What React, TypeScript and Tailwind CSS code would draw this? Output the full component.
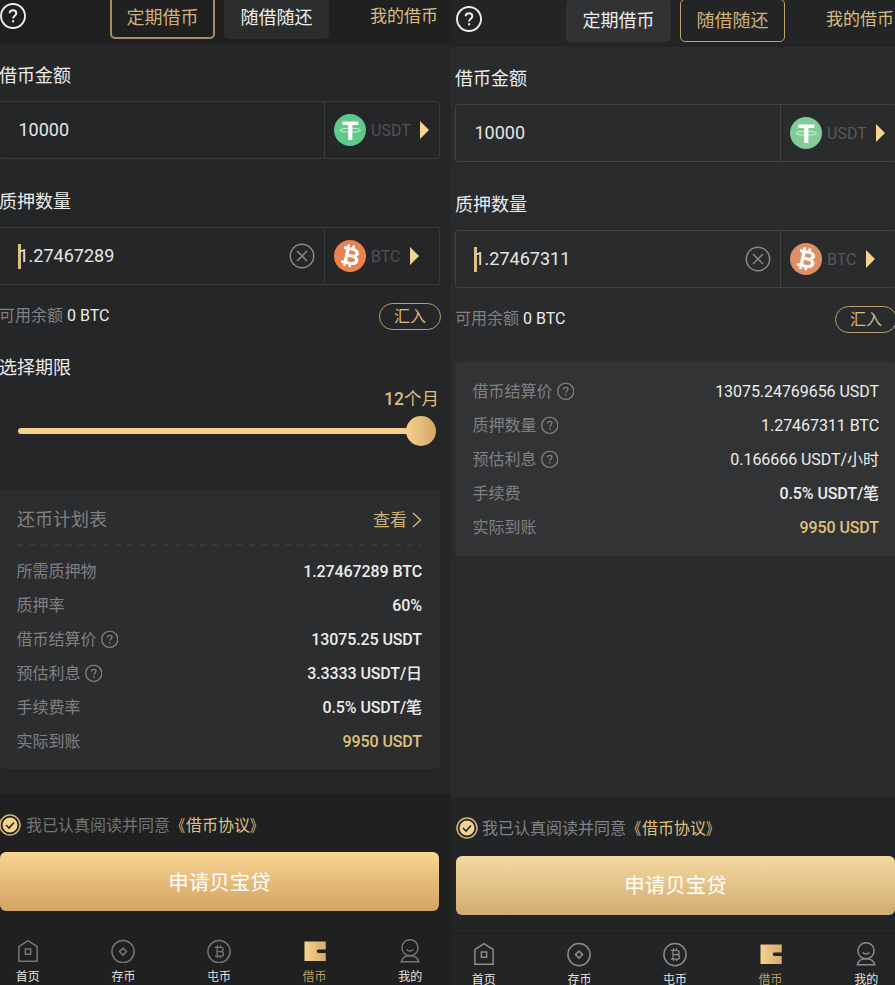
import type { ReactNode } from "react";
import clsx from "clsx";

type Row = { label: string; value: string; help?: boolean; tone?: "regular" | "bold" | "gold" };

const Help = ({ className }: { className: string }) => (
  <svg viewBox="0 0 26 26" fill="none" stroke="currentColor" className={className}>
    <circle cx="13" cy="13" r="12" strokeWidth="1.9" />
    <path d="M9.7 10.3c0-1.8 1.4-3 3.3-3s3.3 1.2 3.3 2.9c0 2.5-3.2 2.5-3.2 5.2" strokeWidth="2" />
    <path d="M13.1 17.2v2.1" strokeWidth="2.1" />
  </svg>
);

const Usdt = ({ dim }: { dim: boolean }) => (
  <svg viewBox="0 0 32 32" className="size-8 shrink-0">
    <circle cx="16" cy="16" r="16" fill={dim ? "#83cb98" : "#61c88c"} />
    <path d="M8.300 7.400h16v3.700h-5.900v14.900h-4.200V11.100H8.300z" fill="#fff" />
    <ellipse cx="16.300" cy="16.200" rx="10.300" ry="2" fill="none" stroke="#fff" strokeOpacity="0.85" strokeWidth="0.800" />
  </svg>
);

const Btc = ({ dim }: { dim: boolean }) => (
  <svg viewBox="0 0 32 32" className="size-8 shrink-0">
    <circle cx="16" cy="16" r="16" fill={dim ? "#de9064" : "#e9824e"} />
    <g transform="rotate(12 16 16) translate(-2.200 0) scale(1.150 1)" fill="none" stroke="#fff">
      <path d="M9.3 8.9h8c5.600 0 5.600 6.700 0 6.700h-4.500M17.500 15.600c6.400 0 6.400 7.500 0 7.500H9.300M12.900 8.900v14.200" strokeWidth="3" />
      <path d="M12.800 5v4M17.300 5v4M12.800 23v4M17.300 23v4" strokeWidth="2.200" />
    </g>
  </svg>
);

const Clear = () => (
  <svg viewBox="0 0 26 26" fill="none" stroke="currentColor" className="size-[26px] shrink-0 text-[#87888b]">
    <circle cx="13" cy="13" r="11.700" strokeWidth="1.500" />
    <path d="m8 8 10 10M18 8 8 18" strokeWidth="1.500" />
  </svg>
);

function Field({ value, coin, dim, editing }: { value: string; coin: "USDT" | "BTC"; dim: boolean; editing?: boolean }) {
  return (
    <div className={clsx("flex h-[58px] w-[441px] rounded-[3px] border-[1.5px]", dim ? "border-[#414244]" : "border-[#3a3b3d]")}>
      <div className="flex w-[324px] items-center pl-[18px] pr-[9px]">
        {editing && <i className="-mr-[3px] h-[25px] w-[3px] bg-[#dfbf79]" />}
        <span className="-ml-[0.5px] flex-1 pl-px text-[18px] leading-6 text-[#e6e6e6]">{value}</span>
        {editing && <Clear />}
      </div>
      <div className={clsx("flex flex-1 items-center border-l-[1.5px] pl-[9px]", dim ? "border-[#414244]" : "border-[#3a3b3d]")}>
        {coin === "USDT" ? <Usdt dim={dim} /> : <Btc dim={dim} />}
        <span className={clsx("ml-[5px] pt-[2px] text-[16px] leading-6", dim ? "text-[#58595b]" : "text-[#515254]")}>{coin}</span>
        <svg viewBox="0 0 9 18" className="ml-[9px] h-[18px] w-[9px]">
          <path d="M0 0 9 9 0 18z" fill="#f6d48d" />
        </svg>
      </div>
    </div>
  );
}

function Rows({ rows }: { rows: Row[] }) {
  return (
    <>
      {rows.map((r) => (
        <div key={r.label} className="flex h-[34px] items-center justify-between text-[16px] leading-6">
          <span className="-ml-[0.5px] flex items-center text-[#808184]">
            {r.label}
            {r.help && <Help className="ml-[4px] size-[17.500px] -translate-y-[0.5px]" />}
          </span>
          <span
            className={clsx(
              r.tone === "regular" ? "font-normal tracking-[-0.05px]" : "font-medium tracking-[-0.1px]",
              r.tone === "gold" ? "text-[#dfc17f]" : "text-[#ececec]",
            )}
          >
            {r.value}
          </span>
        </div>
      ))}
    </>
  );
}

const navIcons: ReactNode[] = [
  <path key="h" d="M3.600 8.600 14 1.800l10.400 6.800v16.800H3.600zM11 11.300h6v6h-6z" />,
  <g key="s">
    <circle cx="14" cy="14.400" r="12.700" />
    <path d="m14 10.400 4 4-4 4-4-4z" />
  </g>,
  <g key="b">
    <circle cx="14" cy="14.400" r="12.700" />
    <path d="M9.200 9.600h6.600c4 0 4 4.800 0 4.800h-4M16 14.400c4.300 0 4.300 5.200 0 5.200H9.200M11.700 9.600v10M12.300 7.200v2.400M15.700 7.200v2.400M12.300 19.600v2.400M15.700 19.600v2.400" strokeWidth="1.400" />
  </g>,
  <path key="w" d="M2 2.800h24.300V12H18a2 2 0 0 0 0 4h8.300v9H2z" fill="url(#wallet)" stroke="none" />,
  <g key="m">
    <circle cx="14" cy="10" r="9.200" />
    <path d="M10.300 12c1.600 2.300 5.800 2.300 7.400 0M4 26c1.200-4.300 5.200-6.800 10-6.800s8.800 2.500 10 6.800z" />
  </g>,
];
const navLabels = ["首页", "存币", "屯币", "借币", "我的"];

function Nav({ dim }: { dim: boolean }) {
  return (
    <nav className={clsx("-ml-[20px] flex h-[55px] w-[478px] border-t pt-[8px]", dim ? "border-[#1d1e1f]" : "border-[#1c1c1c]")}>
      {navLabels.map((label, i) => (
        <div key={label} className="flex w-[95.600px] shrink-0 flex-col items-center">
          <svg viewBox="0 0 28 28" fill="none" strokeWidth="1.700" className={clsx("size-7", dim ? "stroke-[#8b8c8f]" : "stroke-[#75767a]")}>
            <defs>
              <linearGradient id="wallet">
                <stop stopColor="#f5d38d" />
                <stop offset="1" stopColor="#d6aa6b" />
              </linearGradient>
            </defs>
            {navIcons[i]}
          </svg>
          <span className={clsx("mt-[5.500px] text-[12px] leading-4", i === 3 ? "text-[#b99d63]" : "text-[#e4e4e4]")}>{label}</span>
        </div>
      ))}
    </nav>
  );
}

function Screen({ flexible, children }: { flexible: boolean; children: ReactNode }) {
  const tab = "flex h-[43px] w-[105px] items-center justify-center rounded-[5px] text-[18px] leading-6";
  const on = flexible ? "border-[1.5px] border-[#bfa36c] text-[#cdb077]" : "border-2 border-[#a98f5e] text-[#cdb077]";
  const off = flexible ? "bg-[#313234] text-[#ececec]" : "bg-[#2b2c2d] text-[#ececec]";
  return (
    <section
      className={clsx(
        "flex h-[988px] shrink-0 flex-col overflow-hidden",
        flexible ? "w-[444px] bg-[#2a2b2c]" : "-mt-[3px] w-[451px] bg-[#252627]",
      )}
    >
      <header className={clsx("flex h-[47px] shrink-0", flexible ? "bg-[#232425] pl-[5px]" : "bg-[#202020]")}>
        <Help className="mt-[6px] size-[26px] shrink-0 text-[#ececec]" />
        <div className="-mt-px ml-[84px] flex shrink-0 gap-[9px]">
          <div className={clsx(tab, flexible ? off : on)}>定期借币</div>
          <div className={clsx(tab, flexible ? on : off)}>随借随还</div>
        </div>
        <span className="ml-[41px] mt-[7px] shrink-0 whitespace-nowrap text-[17px] leading-6 text-[#d9bd80]">我的借币</span>
      </header>
      <main className={clsx("flex h-[750px] shrink-0 flex-col", flexible ? "pl-[4px]" : "-ml-px")}>
        <h2 className="mt-[20px] h-6 text-[18px] leading-6 text-[#ececec]">借币金额</h2>
        <div className="mt-[13px]">
          <Field value="10000" coin="USDT" dim={flexible} />
        </div>
        <h2 className="mt-[31px] h-6 text-[18px] leading-6 text-[#ececec]">质押数量</h2>
        <div className="mt-[13px]">
          <Field value={flexible ? "1.27467311" : "1.27467289"} coin="BTC" dim={flexible} editing />
        </div>
        <div className="mt-[18px] flex h-[27px] w-[442px] shrink-0 items-center justify-between text-[16px] leading-6">
          <span className="-mt-[2px] text-[#808184]">
            可用余额 <span className="text-[#ececec]">0 BTC</span>
          </span>
          <span className="flex h-[27px] w-[62px] items-center justify-center rounded-full border-[1.500px] border-[#bda06a] pt-px text-[#d5b97e]">汇入</span>
        </div>
        {children}
      </main>
      <footer className={clsx("h-[191px] shrink-0", flexible ? "bg-[#232425] pl-[5px]" : "bg-[#202020]")}>
        <div className="flex h-[58px] items-center pt-[3px] text-[16px] leading-6">
          <svg viewBox="0 0 22 22" className={clsx("size-[22px] shrink-0", flexible ? "mr-[4px]" : "-ml-px mr-[5px]")}>
            <circle cx="11" cy="11" r="10" fill="none" stroke="#d3b57a" strokeWidth="1.500" />
            <circle cx="11" cy="11" r="7.500" fill="#f4d38e" />
            <path d="m7 11 3 3 5-5.500" fill="none" stroke="#252627" strokeWidth="1.600" />
          </svg>
          <span className={clsx("whitespace-nowrap pt-[2px]", flexible ? "text-[#828386]" : "text-[#747578]")}>
            我已认真阅读并同意
            <span className="text-[#ddc183]">
              <span className="inline-block origin-right -translate-x-px scale-x-[0.85]">《</span>借币协议
              <span className="inline-block origin-left scale-x-[0.8]">》</span>
            </span>
          </span>
        </div>
        <div
          className={clsx(
            "flex h-[59px] w-[439px] items-center justify-center rounded-[6px] bg-linear-to-b pt-[3px] text-[20.500px] text-white",
            flexible ? "mt-[0.5px] from-[#f5d9a0] to-[#cfac73]" : "mt-[0.4px] from-[#f8d593] to-[#d2a365]",
          )}
        >
          申请贝宝贷
        </div>
        <div className="h-[18.500px]" />
        <Nav dim={flexible} />
      </footer>
    </section>
  );
}

export default function App() {
  return (
    <div lang="zh-CN" className="flex h-[985px] w-[895px] overflow-hidden bg-[#252627] font-['Roboto','Noto_Sans_CJK_SC',sans-serif]">
      <Screen flexible={false}>
        <h2 className="mt-[25px] h-6 pt-px text-[18px] leading-6 text-[#ececec]">选择期限</h2>
        <div className="mt-[8px] h-6 w-[440px] text-right text-[17.500px] font-medium leading-6 text-[#d9bb7d]">
          12<span className="font-normal">个月</span>
        </div>
        <div className="ml-[19px] mt-[4px] flex h-[31px] w-[418px] items-center">
          <div className="h-[6px] flex-1 rounded-l-full bg-[#f4d28b]" />
          <div className="-ml-px size-[30px] rounded-full bg-linear-to-r from-[#f5d28c] to-[#d3a665]" />
        </div>
        <div className="ml-px mt-[44px] h-[279px] w-[440px] rounded-[4px] bg-[#2c2d2e] pl-[17px] pr-[18px]">
          <div className="flex h-[54px] items-center pt-[6px]">
            <span className="flex-1 text-[18px] leading-6 text-[#808184]">还币计划表</span>
            <span className="text-[17px] leading-6 text-[#cfb376]">查看</span>
            <svg viewBox="0 0 10 16" className="ml-[5px] h-4 w-[10px]">
              <path d="m1 1 7.500 7L1 15" fill="none" stroke="#cfb376" strokeWidth="1.500" />
            </svg>
          </div>
          <svg className="block h-[11px] w-full">
            <path d="M0 1h405" stroke="#3c3d3f" strokeWidth="1.500" strokeDasharray="6.200 6" />
          </svg>
          <Rows
            rows={[
              { label: "所需质押物", value: "1.27467289 BTC" },
              { label: "质押率", value: "60%" },
              { label: "借币结算价", value: "13075.25 USDT", help: true },
              { label: "预估利息", value: "3.3333 USDT/日", help: true },
              { label: "手续费率", value: "0.5% USDT/笔" },
              { label: "实际到账", value: "9950 USDT", tone: "gold" },
            ]}
          />
        </div>
      </Screen>
      <Screen flexible>
        <div className="mt-[29px] h-[194px] w-[441px] rounded-[4px] bg-[#323334] pl-[18px] pr-[17px] pt-[13px]">
          <Rows
            rows={[
              { label: "借币结算价", value: "13075.24769656 USDT", help: true, tone: "regular" },
              { label: "质押数量", value: "1.27467311 BTC", help: true, tone: "regular" },
              { label: "预估利息", value: "0.166666 USDT/小时", help: true, tone: "regular" },
              { label: "手续费", value: "0.5% USDT/笔" },
              { label: "实际到账", value: "9950 USDT", tone: "gold" },
            ]}
          />
        </div>
      </Screen>
    </div>
  );
}
